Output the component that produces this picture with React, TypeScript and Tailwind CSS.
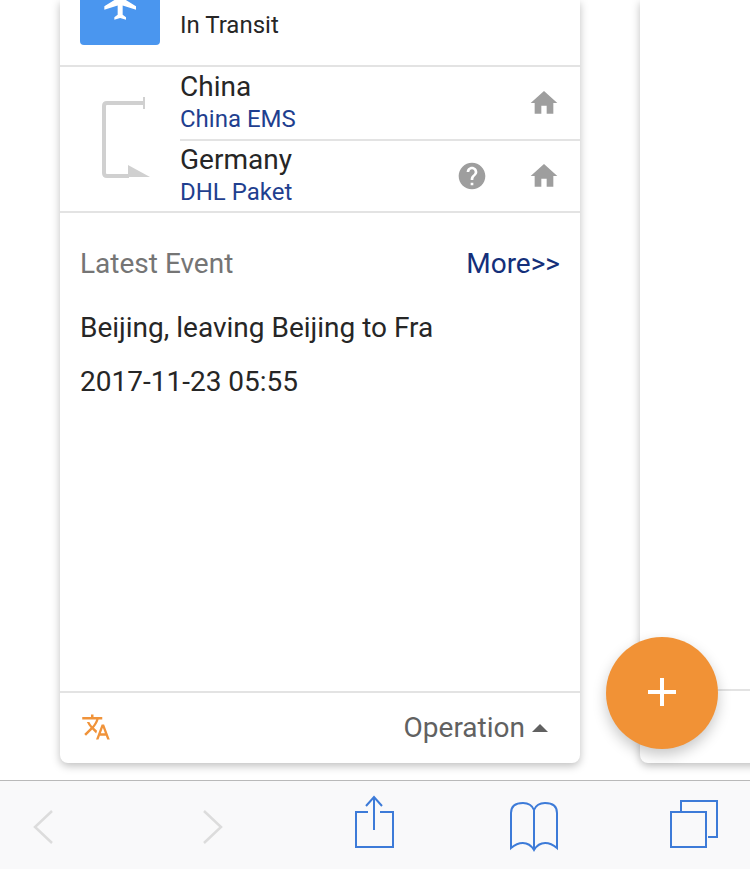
import React, { JSX } from 'react';

const HOME = 'M10 20v-6h4v6h5v-8h3L12 3 2 12h3v8z';
const HELP = 'M12 2C6.48 2 2 6.48 2 12s4.48 10 10 10 10-4.48 10-10S17.52 2 12 2zm1 17h-2v-2h2v2zm2.07-7.75l-.9.92C13.45 12.9 13 13.5 13 15h-2v-.5c0-1.1.45-2.1 1.17-2.83l1.24-1.26c.37-.36.59-.86.59-1.41 0-1.1-.9-2-2-2s-2 .9-2 2H8c0-2.21 1.79-4 4-4s4 1.79 4 4c0 .88-.36 1.68-.93 2.25z';
const PLANE = 'M21 16v-2l-8-5V3.5c0-.83-.67-1.5-1.5-1.5S10 2.67 10 3.5V9l-8 5v2l8-2.5V19l-2 1.5V22l3.5-1 3.5 1v-1.5L13 19v-5.5l8 2.5z';
const TRANSLATE = 'M12.87 15.07l-2.54-2.51.03-.03c1.74-1.94 2.98-4.17 3.71-6.53H17V4h-7V2H8v2H1v1.99h11.17C11.5 7.92 10.44 9.75 9 11.35 8.07 10.32 7.3 9.19 6.69 8h-2c.73 1.63 1.73 3.17 2.98 4.56l-5.09 5.02L4 19l5-5 3.11 3.11.76-2.04zM18.5 10h-2L12 22h2l1.12-3h4.75L21 22h2l-4.5-12zm-2.62 7l1.62-4.33L19.12 17h-3.24z';

const Icon = ({ d, className }: { d: string; className: string }): JSX.Element => (
  <svg viewBox="0 0 24 24" fill="currentColor" className={className}><path d={d} /></svg>
);

const Leg = ({ country, carrier, help, border }: { country: string; carrier: string; help?: boolean; border?: boolean }): JSX.Element => (
  <div className={`flex items-center ${border ? 'h-[74px] border-b-2 border-[#e3e3e3]' : 'h-[70px]'}`}>
    <div className="flex-1">
      <div className="text-[28px] leading-[32px] text-[#262626]">{country}</div>
      <div className="text-[24px] leading-[32px] text-[#1f3f8f]">{carrier}</div>
    </div>
    {help && <Icon d={HELP} className="w-8 h-8 text-[#9e9e9e] mr-10" />}
    <Icon d={HOME} className="w-8 h-8 text-[#9e9e9e] mr-5" />
  </div>
);

export default function App(): JSX.Element {
  return (
    <div className="relative w-[750px] h-[869px] overflow-hidden bg-white font-['Roboto',sans-serif]">
      <div className="h-[780px] flex gap-[60px] pl-[60px] overflow-hidden">
        <div className="w-[520px] h-[763px] shrink-0 flex flex-col bg-white rounded-b-lg shadow-[0_3px_8px_rgba(0,0,0,0.25)]">
          <div className="h-[67px] shrink-0 flex border-b-2 border-[#e3e3e3] pl-5">
            <div className="w-20 h-[45px] flex justify-center overflow-hidden rounded-b bg-[#4a96ef]">
              <Icon d={PLANE} className="w-10 h-10 -mt-[17px] ml-[2px] shrink-0 text-white" />
            </div>
            <div className="ml-5 mt-[10px] text-[24px] leading-[30px] text-[#262626]">In Transit</div>
          </div>

          <div className="flex border-b-2 border-[#e3e3e3]">
            <div className="w-[120px] shrink-0 flex justify-center">
              <svg width="120" height="144" viewBox="0 0 120 144" className="text-[#d0d0d0]">
                <path d="M83 36H47q-3 0-3 3v67q0 3 3 3h22" fill="none" stroke="currentColor" strokeWidth="4" />
                <path d="M84 30v12" fill="none" stroke="currentColor" strokeWidth="2" />
                <path d="M68 98v12h22z" fill="currentColor" />
              </svg>
            </div>
            <div className="flex-1">
              <Leg country="China" carrier="China EMS" border />
              <Leg country="Germany" carrier="DHL Paket" help />
            </div>
          </div>

          <div className="flex-1 px-5">
            <div className="flex items-center justify-between mt-[34px]">
              <span className="text-[28px] leading-[34px] text-[#757575]">Latest Event</span>
              <span className="text-[28px] leading-[34px] text-[#142f7a]">More&gt;&gt;</span>
            </div>
            <div className="mt-[30px] text-[28px] leading-[34px] text-[#262626]">Beijing, leaving Beijing to Fra</div>
            <div className="mt-5 text-[28px] leading-[34px] text-[#262626]">2017-11-23 05:55</div>
          </div>

          <div className="h-[72px] shrink-0 flex items-center border-t-2 border-[#e3e3e3] pl-5 pr-8">
            <Icon d={TRANSLATE} className="w-[30px] h-[30px] ml-px -mt-[3px] text-[#f0933a]" />
            <span className="ml-auto text-[28px] text-[#616161]">Operation</span>
            <span className="ml-[7px] w-0 h-0 border-x-[8px] border-x-transparent border-b-[8px] border-b-[#616161]" />
          </div>
        </div>

        <div className="w-[520px] h-[763px] shrink-0 flex flex-col justify-end bg-white rounded-b-lg shadow-[0_3px_8px_rgba(0,0,0,0.25)]">
          <div className="h-[74px] border-t-2 border-[#e3e3e3]" />
        </div>
      </div>

      <div className="h-[89px] flex items-center border-t border-[#b9b9b9] bg-[#f9f9fa] relative">
        <svg width="750" height="89" viewBox="0 0 750 89" className="absolute left-0 -top-[1px]" fill="none" stroke="#dcdcdc" strokeWidth="2.5">
          <path d="M52 31L35 47l17 16" />
          <path d="M204 31l17 16-17 16" />
          <g stroke="#3d7bd8" strokeWidth="2">
            <path d="M368 32h-12v35h37V32h-13" />
            <path d="M374 50V17M366 26l8-9 8 9" />
            <path d="M534 30C532 25 528 23 523 23 516 23 511 26 511 33V68C518 62 528 60 534 70 540 60 550 62 557 68V33C557 26 552 23 545 23 540 23 536 25 534 30V69" />
            <path d="M671 32h35v35h-35z" />
            <path d="M681 32V21h36v36h-9" />
          </g>
        </svg>
      </div>

      <div className="absolute left-[606px] top-[637px] w-28 h-28 rounded-full bg-[#f19236] shadow-[0_6px_14px_rgba(0,0,0,0.22)] flex items-center justify-center">
        <svg width="28" height="28" viewBox="0 0 28 28" stroke="#fff" strokeWidth="4" className="-mt-[2px]"><path d="M14 0v28M0 14h28" /></svg>
      </div>
    </div>
  );
}
